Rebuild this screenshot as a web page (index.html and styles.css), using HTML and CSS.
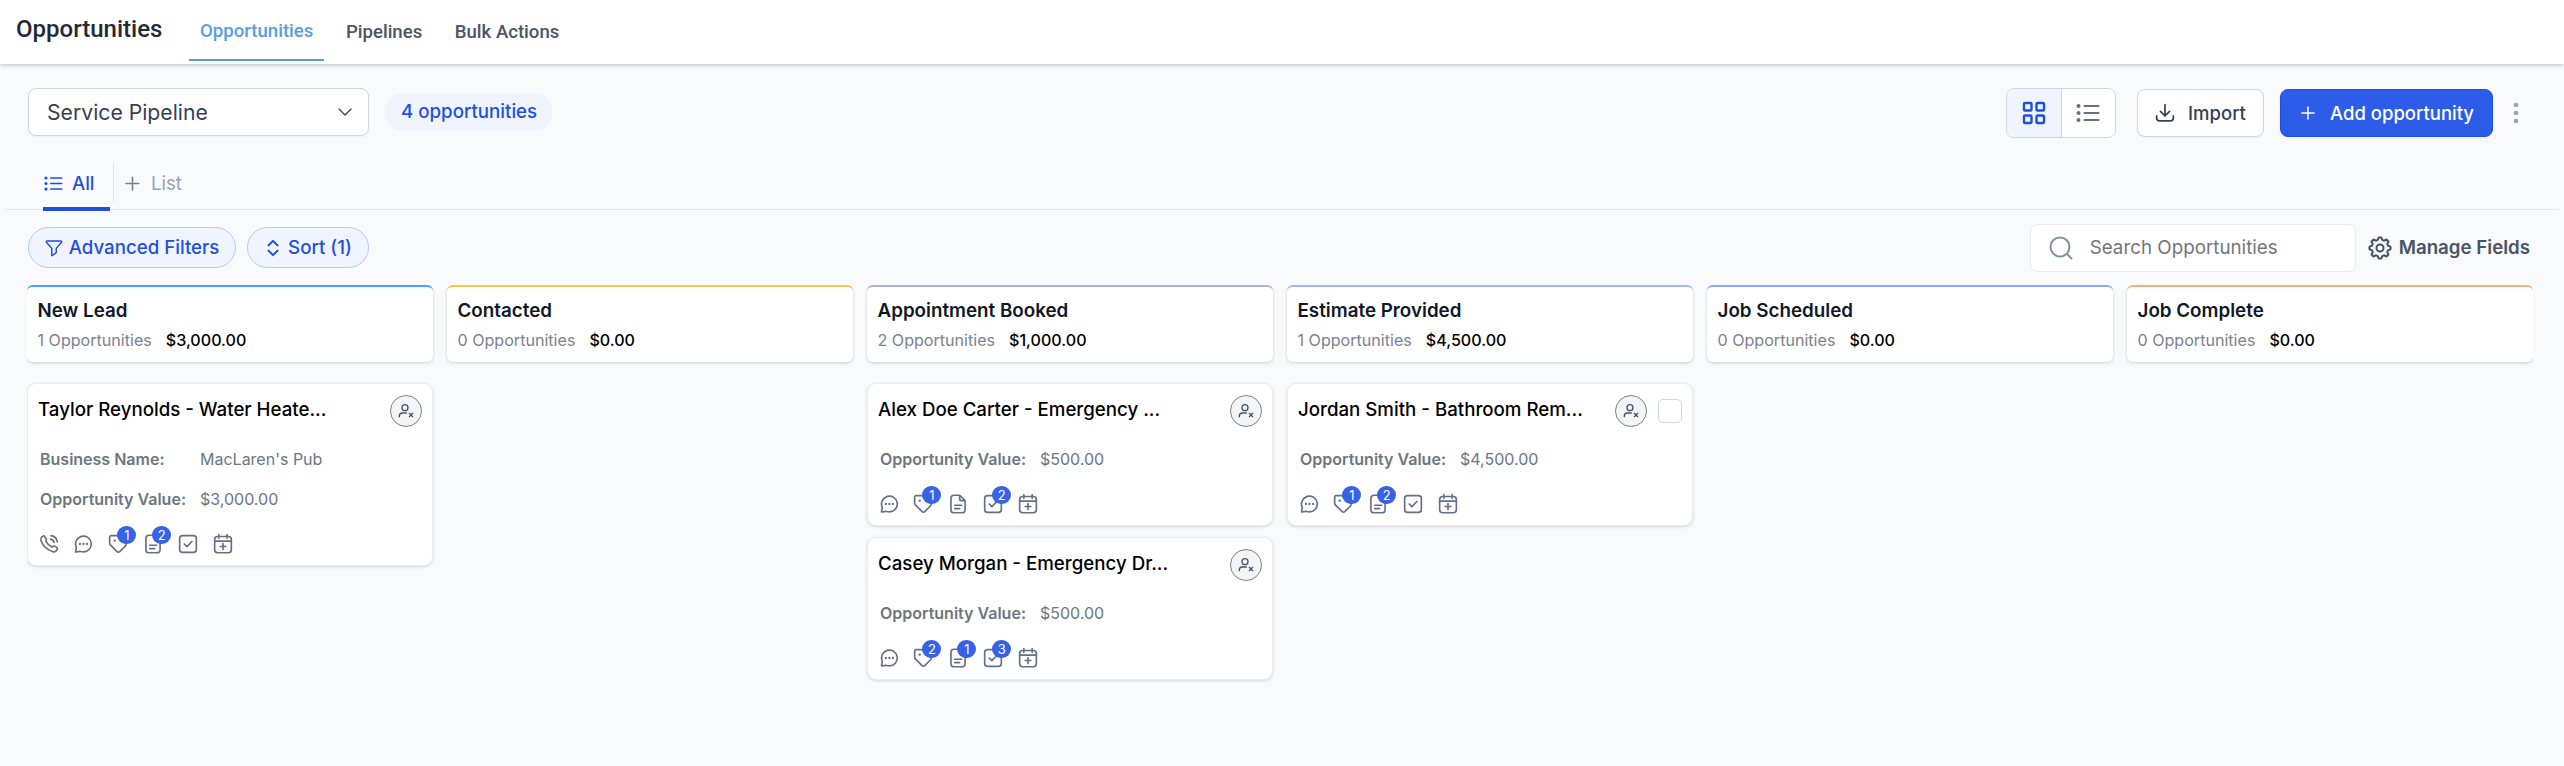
FILE: index.html
```
<!DOCTYPE html>
<html lang="en">
<head>
    <meta charset="UTF-8">
    <meta name="viewport" content="width=device-width, initial-scale=1.0">
    <title>Opportunities</title>
    <link rel="stylesheet" href="styles.css">
</head>
<body>
    <!-- icon sprite -->
    <svg class="sprite">
        <symbol id="i-phone" viewBox="0 0 24 24"><path d="M8.4 8.9a14.8 14.8 0 0 0 7 6.7c.7.3 1-.4 1.6-.9.5-.5 1.2-.6 1.8-.2l2.7 1.9c.7.5.9 1.2.4 2l-1 1.5c-1.1 1.5-2.7 1.9-4.4 1.3C9.3 18.7 4.6 14.3 2.3 7.9c-.7-1.9-.2-3.3 1.2-4.5l1.3-.9c.7-.5 1.5-.3 2 .4l1.9 2.800c.4.6.3 1.2-.2 1.8-.4.5-.5.8-.1 1.4zM14 6.2a5 5 0 0 1 4 4M14.500 2a9 9 0 0 1 7.500 7.500"/></symbol>
        <symbol id="i-chat" viewBox="0 0 24 24"><path d="M12.500 21.500a9.500 9.500 0 1 0-8.700-5.700c.2.5.1 1 .1 1.500l-.9 4c.2.3.4.4.8.3l4.200-.8c.5-.1.9 0 1.400.2 1 .3 2 .5 3.100.5z"/><path class="dots" d="M8.300 12h.01M12.500 12h.01M16.700 12h.01"/></symbol>
        <symbol id="i-tag" viewBox="0 0 24 24"><path d="M2 3.500V11c0 .8.3 1.500.8 2l7.800 7.800c1.200 1.200 2.600 1.200 3.800 0l6.400-6.400c1.200-1.200 1.200-2.600 0-3.800L13 2.800c-.5-.5-1.200-.8-2-.8H3.500C2.700 2 2 2.700 2 3.500z"/><path class="dots" d="M8 8h.01"/></symbol>
        <symbol id="i-note" viewBox="0 0 24 24"><path d="M14 1.500H7.500c-2.800 0-4 1.200-4 4v13c0 2.800 1.200 4 4 4h9c2.800 0 4-1.200 4-4V8zM14 1.500V6c0 1.400.6 2 2 2h4.500M8 13.500h8.500M8 17.500h6"/></symbol>
        <symbol id="i-check" viewBox="0 0 24 24"><rect x="2" y="2" width="20" height="20" rx="3.500"/><path d="M7.500 12l3.200 3.200 6-6.200"/></symbol>
        <symbol id="i-cal" viewBox="0 0 24 24"><rect x="2" y="3" width="20" height="19.500" rx="3.500"/><path d="M2 8.500h20M7 .8v4.400M17 .8v4.400M12 11.500v7M8.500 15h7"/></symbol>
        <symbol id="i-user" viewBox="0 0 24 24"><circle cx="10.500" cy="7" r="4.500"/><path d="M2 20.500v-1c0-3 1.700-4.500 4.500-4.500h6M17 15.500l5 5M22 15.500l-5 5"/></symbol>
        <symbol id="i-plus" viewBox="0 0 24 24"><path d="M12 4v16M4 12h16"/></symbol>
        <symbol id="i-list" viewBox="0 0 24 24"><path d="M8.500 5H22.500M8.500 12H22.500M8.500 19H22.500"/><path class="bullets" d="M2.500 5h.01M2.500 12h.01M2.500 19h.01"/></symbol>
    </svg>

    <header class="topbar">
        <h1>Opportunities</h1>
        <nav class="topnav">
            <a class="active">Opportunities</a>
            <a>Pipelines</a>
            <a>Bulk Actions</a>
        </nav>
    </header>

    <main>
        <div class="toolbar">
            <div class="select">Service Pipeline
                <svg class="icon" viewBox="0 0 24 24"><path d="M3 7.500l9 9 9-9"/></svg>
            </div>
            <span class="count">4 opportunities</span>
            <div class="toggle">
                <button class="on"><svg class="icon" viewBox="0 0 24 24"><rect x="2" y="2" width="7.500" height="7.500" rx="1"/><rect x="14.500" y="2" width="7.500" height="7.500" rx="1"/><rect x="2" y="14.500" width="7.500" height="7.500" rx="1"/><rect x="14.500" y="14.500" width="7.500" height="7.500" rx="1"/></svg></button>
                <button><svg class="icon"><use href="#i-list"/></svg></button>
            </div>
            <button class="btn import"><svg class="icon" viewBox="0 0 24 24"><path d="M12 2v13.500M6.500 10l5.500 5.500 5.500-5.500M2 15.500v2.500c0 2.500 1 3.500 3.500 3.500h13c2.500 0 3.500-1 3.500-3.500v-2.500"/></svg>Import</button>
            <button class="btn primary"><svg class="icon"><use href="#i-plus"/></svg>Add opportunity</button>
            <svg class="more" viewBox="0 0 6 22"><circle cx="3" cy="3" r="2.300"/><circle cx="3" cy="11" r="2.300"/><circle cx="3" cy="19" r="2.300"/></svg>
        </div>

        <div class="views">
            <a class="view active"><svg class="icon"><use href="#i-list"/></svg>All</a>
            <a class="view add"><svg class="icon"><use href="#i-plus"/></svg>List</a>
        </div>

        <div class="filters">
            <button class="pill"><svg class="icon" viewBox="0 0 24 24"><path d="M3 2.500h18c1.300 0 1.600 1.200.8 2.200L15 12.500V18l-5 4c-.5.4-1 .2-1-.5v-9L2.200 4.700C1.400 3.700 1.700 2.500 3 2.500z"/></svg>Advanced Filters</button>
            <button class="pill sort"><svg class="icon" viewBox="0 0 24 24"><path d="M6 8.500l6-6 6 6M6 15.500l6 6 6-6"/></svg>Sort (1)</button>
            <div class="search">
                <svg class="icon" viewBox="0 0 24 24"><circle cx="11" cy="11" r="9.500"/><path d="M18 18l4.500 4.500"/></svg>
                <input type="text" placeholder="Search Opportunities">
            </div>
            <a class="manage"><svg class="icon" viewBox="0 0 24 24"><circle cx="12" cy="12" r="3.500"/><path d="M9.800 3.900 10.600 1.500h2.800L14.200 3.900l2 .8 2.300-1.200 2 2L19.300 7.800l.8 2 2.400.8v2.800l-2.400.8-.8 2 1.200 2.300-2 2-2.300-1.200-2 .8-.8 2.400h-2.800L9.800 20.100l-2-.8-2.300 1.200-2-2 1.200-2.300-.8-2-2.400-.8v-2.800l2.400-.8.8-2-1.200-2.300 2-2 2.300 1.200z"/></svg>Manage Fields</a>
        </div>

        <div class="board" id="board"></div>
    </main>

    <script src="board.js"></script>
</body>
</html>
```
FILE: styles.css
```
* {
    box-sizing: border-box;
}
body {
    margin: 0;
    height: 766px;
    overflow: hidden;
    background: #f9fafc;
    font-family: Inter, sans-serif;
    color: #101828;
}
h1, h2, h3, p {
    margin: 0;
}
button {
    font-family: inherit;
    padding: 0;
    border: 0;
}
.sprite {
    display: none;
}
.icon {
    width: 20px;
    height: 20px;
    flex: none;
    display: block;
}
svg {
    fill: none;
    stroke: currentColor;
    stroke-width: 2;
    stroke-linecap: round;
    stroke-linejoin: round;
}
.dots {
    stroke-width: 2.8;
}
.bullets {
    stroke-width: 4;
}

/* top bar */
.topbar {
    display: flex;
    height: 64px;
    padding-left: 16px;
    background: #fff;
    box-shadow: 0 1px 5px rgba(0, 0, 0, 0.25);
    font-family: Roboto, sans-serif;
}
.topbar h1 {
    width: 173px;
    font-size: 24px;
    font-weight: 500;
    line-height: 58px;
    color: #1f2937;
}
.topnav {
    display: flex;
    height: 61px;
}
.topnav a {
    padding: 0 11px;
    margin-right: 10.5px;
    font-size: 18.6px;
    font-weight: 500;
    line-height: 64px;
    color: #4b5563;
}
.topnav .active {
    color: #549fdc;
    line-height: 62px;
    border-bottom: 2px solid #549fdc;
}

/* pipeline picker and actions */
.toolbar {
    display: flex;
    align-items: center;
    height: 98px;
    padding: 0 45px 0 28px;
}
.select {
    display: flex;
    align-items: center;
    justify-content: space-between;
    width: 341px;
    height: 48px;
    margin-bottom: 2px;
    padding: 0 15px 0 18px;
    background: #fff;
    border: 1px solid #d0d5dd;
    border-radius: 8px;
    box-shadow: 0 1px 2px rgba(16, 24, 40, 0.05);
    font-size: 21.2px;
    color: #344054;
}
.select .icon {
    width: 16px;
    height: 16px;
}
.count {
    margin: 0 auto 3px 16px;
    padding: 0 16px;
    border-radius: 19px;
    background: #eff4ff;
    color: #1f4fe0;
    font-size: 18.7px;
    font-weight: 500;
    line-height: 38px;
}
.toggle {
    display: flex;
    width: 110px;
    height: 50px;
    border: 1px solid #d0d5dd;
    border-radius: 8px;
    overflow: hidden;
}
.toggle button {
    flex: 1;
    display: flex;
    align-items: center;
    justify-content: center;
    background: #fff;
    color: #667085;
}
.toggle .on {
    background: #eff4ff;
    color: #1f4fe0;
    border-right: 1px solid #d0d5dd;
}
.toggle .icon {
    width: 24px;
    height: 24px;
}
.toggle .on .icon {
    stroke-width: 2.4;
}
.btn {
    display: flex;
    align-items: center;
    justify-content: center;
    height: 48px;
    gap: 13px;
    border: 1px solid #d0d5dd;
    border-radius: 8px;
    background: #fff;
    box-shadow: 0 1px 2px rgba(16, 24, 40, 0.05);
    color: #344054;
    font-size: 18.5px;
    font-weight: 500;
}
.import {
    width: 127px;
    margin: 0 16px 0 21px;
}
.primary {
    width: 213px;
    background: #2d5de8;
    border-color: #1f4fe0;
    color: #fff;
}
.primary .icon {
    width: 18px;
    height: 18px;
}
.more {
    width: 6px;
    height: 22px;
    margin-left: 20px;
    fill: #98a2b3;
    stroke: none;
}

/* saved views */
.views {
    display: flex;
    height: 48px;
    margin: 0 5px;
    padding-left: 38px;
    border-bottom: 1px solid #e4e7ec;
}
.view {
    display: flex;
    gap: 9px;
    height: 49px;
    font-size: 18.6px;
    line-height: 43px;
}
.view .icon {
    width: 19px;
    height: 19px;
    margin-top: 12px;
}
.view.active {
    width: 67px;
    padding-left: 1px;
    color: #1f4fe0;
    font-weight: 500;
    border-bottom: 4px solid #1f4fe0;
}
.view.add {
    height: 40px;
    margin-left: 3px;
    padding-left: 9px;
    border-left: 1px solid #e4e7ec;
    color: #98a2b3;
}
.add .icon {
    color: #7d7d7d;
}

/* filters */
.filters {
    display: flex;
    align-items: center;
    height: 75px;
    padding: 0 34px 0 28px;
}
.pill {
    display: flex;
    align-items: center;
    justify-content: center;
    gap: 6px;
    width: 208px;
    height: 41px;
    border: 1px solid #b6c9fb;
    border-radius: 21px;
    background: #eff4ff;
    color: #1f4fe0;
    font-size: 18.7px;
    font-weight: 500;
}
.pill .icon {
    width: 18px;
    height: 18px;
}
.sort {
    width: 122px;
    margin-left: 11px;
}
.sort .icon {
    stroke-width: 2.8;
}
.search {
    display: flex;
    align-items: center;
    width: 326px;
    height: 48px;
    margin: 0 12px 0 auto;
    padding-left: 18px;
    background: #fff;
    border: 1px solid #e9ebef;
    border-radius: 8px;
    color: #8590a2;
}
.search .icon {
    width: 24px;
    height: 24px;
}
.search input {
    width: 250px;
    padding: 0;
    margin-left: 17px;
    border: 0;
    font: 400 18.8px Inter, sans-serif;
}
.search input::placeholder {
    color: #757575;
}
.manage {
    display: flex;
    align-items: center;
    gap: 7px;
    color: #475467;
    font-size: 18.7px;
    font-weight: 600;
}
.manage .icon {
    width: 24px;
    height: 24px;
}

/* board */
.board {
    display: flex;
    gap: 14px;
    margin-left: 27px;
    width: 2506px;
    height: 481px;
    overflow: hidden;
}
.column {
    flex: none;
    width: 406px;
}
.stage {
    height: 77px;
    margin-bottom: 21px;
    padding: 12px 10.5px 0;
    background: #fff;
    border-top: 2px solid;
    border-radius: 6px;
    box-shadow: 0 1px 3px rgba(16, 24, 40, 0.2);
}
.stage h2 {
    font-size: 18.8px;
    font-weight: 600;
    line-height: 24px;
    color: #101828;
}
.stage p {
    display: flex;
    gap: 14px;
    margin-top: 7px;
    font-size: 16.1px;
    line-height: 20px;
    color: #7b8291;
}
.stage strong {
    font-weight: 500;
    color: #000;
}
.card {
    width: 406px;
    margin-bottom: 11px;
    padding: 11px 10px 0;
    height: 143px;
    background: #fff;
    border: 1px solid #eaecf0;
    border-radius: 9px;
    box-shadow: 0 1px 3px rgba(16, 24, 40, 0.16);
}
.card.tall {
    height: 183px;
}
.card-head {
    display: flex;
    align-items: center;
    height: 32px;
}
.card-head h3 {
    margin-right: auto;
    font-size: 18.7px;
    font-weight: 500;
    line-height: 28px;
    margin-bottom: 2px;
    color: #000;
}
.avatar {
    display: flex;
    align-items: center;
    justify-content: center;
    width: 32px;
    height: 32px;
    border: 1px solid #808080;
    border-radius: 50%;
    background: #f2f4f7;
    color: #475467;
}
.avatar .icon {
    width: 16px;
    height: 16px;
}
.checkbox {
    width: 24px;
    height: 24px;
    margin-left: 11px;
    border: 1px solid #d0d5dd;
    border-radius: 5px;
    background: #fff;
}
.fields {
    margin: 12px 0 0 2px;
}
.fields p {
    display: flex;
    height: 40px;
    font-size: 16px;
    line-height: 40px;
    color: #6b7780;
}
.fields b {
    width: 160px;
    font-weight: 600;
}
.actions {
    display: flex;
    gap: 14.9px;
    margin: 15px 0 0 0.5px;
    color: #667085;
}
.action {
    position: relative;
    width: 20px;
    height: 20px;
}
.badge {
    position: absolute;
    left: 9px;
    top: -8px;
    width: 19px;
    height: 18px;
    border-radius: 9px;
    background: #3762e6;
    color: #fff;
    font-size: 13px;
    line-height: 18px;
    text-align: center;
}
```
FILE: board.js
```
const stages = [
    { name: 'New Lead', total: '$3,000.00', color: '#4a9ff5', cards: [
        { title: 'Taylor Reynolds - Water Heate...', business: "MacLaren's Pub", value: '$3,000.00', phone: true, tag: 1, note: 2 }
    ] },
    { name: 'Contacted', total: '$0.00', color: '#f5c451', cards: [] },
    { name: 'Appointment Booked', total: '$1,000.00', color: '#acb0dc', cards: [
        { title: 'Alex Doe Carter - Emergency ...', value: '$500.00', tag: 1, check: 2 },
        { title: 'Casey Morgan - Emergency Dr...', value: '$500.00', tag: 2, note: 1, check: 3 }
    ] },
    { name: 'Estimate Provided', total: '$4,500.00', color: '#a3b5fa', cards: [
        { title: 'Jordan Smith - Bathroom Rem...', value: '$4,500.00', tag: 1, note: 2, selectable: true }
    ] },
    { name: 'Job Scheduled', total: '$0.00', color: '#8ba6fb', cards: [] },
    { name: 'Job Complete', total: '$0.00', color: '#f0b27c', cards: [] }
];

function action(icon, count) {
    const badge = count ? `<span class="badge">${count}</span>` : '';
    return `<span class="action ${icon}"><svg class="icon"><use href="#i-${icon}"/></svg>${badge}</span>`;
}

function card(c) {
    return `
        <div class="card ${c.business ? 'tall' : ''}">
            <div class="card-head">
                <h3>${c.title}</h3>
                <span class="avatar"><svg class="icon"><use href="#i-user"/></svg></span>
                ${c.selectable ? '<span class="checkbox"></span>' : ''}
            </div>
            <div class="fields">
                ${c.business ? `<p><b>Business Name:</b>${c.business}</p>` : ''}
                <p><b>Opportunity Value:</b>${c.value}</p>
            </div>
            <div class="actions">
                ${c.phone ? action('phone') : ''}
                ${action('chat')}
                ${action('tag', c.tag)}
                ${action('note', c.note)}
                ${action('check', c.check)}
                ${action('cal')}
            </div>
        </div>`;
}

document.getElementById('board').innerHTML = stages.map(s => `
    <section class="column">
        <div class="stage" style="border-color: ${s.color}">
            <h2>${s.name}</h2>
            <p>${s.cards.length} Opportunities <strong>${s.total}</strong></p>
        </div>
        ${s.cards.map(card).join('')}
    </section>`).join('');
```
